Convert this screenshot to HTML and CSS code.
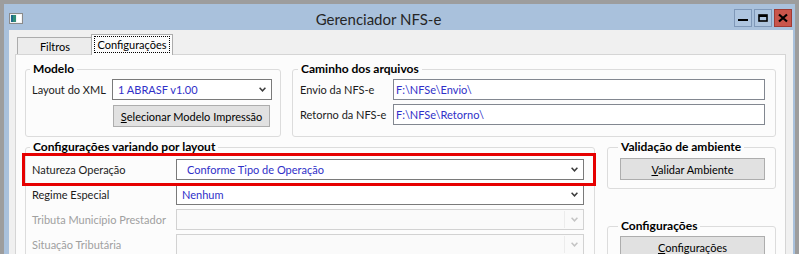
FILE: index.html
```html
<!DOCTYPE html>
<html lang="pt-BR">
<head>
    <meta charset="UTF-8">
    <meta name="viewport" content="width=device-width, initial-scale=1.0">
    <title>Gerenciador NFS-e</title>
    <link rel="stylesheet" href="styles.css">
</head>
<body>
    <div class="window">
        <div class="titlebar">
            <svg class="app-icon" width="14" height="11" viewBox="0 0 14 11">
                <rect x="0.5" y="0.5" width="13" height="10" fill="#f4f4f4" stroke="#8a8a8a"/>
                <rect x="2" y="2" width="5" height="7" fill="#2f8d78"/>
                <rect x="2" y="2" width="2" height="7" fill="#1f6a8a"/>
                <rect x="8" y="2" width="4" height="7" fill="#ffffff"/>
            </svg>
            <div class="title">Gerenciador NFS-e</div>
            <div class="win-buttons">
                <span class="wbtn">
                    <svg width="10" height="10" viewBox="0 0 10 10"><rect x="0" y="6" width="10" height="2" fill="#000"/></svg>
                </span>
                <span class="wbtn">
                    <svg width="10" height="10" viewBox="0 0 10 10"><rect x="1" y="2" width="8" height="6" fill="none" stroke="#000" stroke-width="1.6"/><rect x="1" y="2" width="8" height="2" fill="#000"/></svg>
                </span>
                <span class="wbtn close">
                    <svg width="10" height="10" viewBox="0 0 10 10"><path d="M1 1.5 L9 8.5 M9 1.5 L1 8.5" stroke="#000" stroke-width="2.2"/></svg>
                </span>
            </div>
        </div>

        <div class="client">
            <div class="tabs">
                <div class="tab">Filtros</div>
                <div class="tab active"><span class="focus">Configurações</span></div>
            </div>

            <div class="page">
                <div class="row">
                    <fieldset class="group modelo">
                        <legend>Modelo</legend>
                        <div class="form-grid">
                            <span class="lbl">Layout do XML</span>
                            <div class="combo">
                                <span class="value">1 ABRASF v1.00</span>
                                <svg class="arrow" width="7" height="5" viewBox="0 0 7 5"><polyline points="0.6,0.8 3.5,3.8 6.4,0.8" fill="none" stroke="#3c3c3c" stroke-width="1.5"/></svg>
                            </div>
                            <button class="btn btn-modelo"><u>S</u>elecionar Modelo Impressão</button>
                        </div>
                    </fieldset>

                    <fieldset class="group caminho">
                        <legend>Caminho dos arquivos</legend>
                        <div class="form-grid">
                            <span class="lbl">Envio da NFS-e</span>
                            <div class="field">F:\NFSe\Envio\</div>
                            <span class="lbl">Retorno da NFS-e</span>
                            <div class="field">F:\NFSe\Retorno\</div>
                        </div>
                    </fieldset>
                </div>

                <div class="row row-2">
                    <fieldset class="group layout">
                        <legend>Configurações variando por layout</legend>
                        <div class="form-grid">
                            <div class="hl-row">
                                <span class="lbl">Natureza Operação</span>
                                <div class="combo combo-wide">
                                    <span class="value">Conforme Tipo de Operação</span>
                                    <svg class="arrow" width="7" height="5" viewBox="0 0 7 5"><polyline points="0.6,0.8 3.5,3.8 6.4,0.8" fill="none" stroke="#3c3c3c" stroke-width="1.5"/></svg>
                                </div>
                                <div class="highlight"></div>
                            </div>
                            <span class="lbl">Regime Especial</span>
                            <div class="combo">
                                <span class="value">Nenhum</span>
                                <svg class="arrow" width="7" height="5" viewBox="0 0 7 5"><polyline points="0.6,0.8 3.5,3.8 6.4,0.8" fill="none" stroke="#3c3c3c" stroke-width="1.5"/></svg>
                            </div>
                            <span class="lbl disabled">Tributa Município Prestador</span>
                            <div class="combo combo-off">
                                <span class="value"></span>
                                <span class="sep"></span>
                                <svg class="arrow" width="7" height="5" viewBox="0 0 7 5"><polyline points="0.6,0.8 3.5,3.8 6.4,0.8" fill="none" stroke="#c4c4c4" stroke-width="1.5"/></svg>
                            </div>
                            <span class="lbl disabled">Situação Tributária</span>
                            <div class="combo combo-off">
                                <span class="value"></span>
                                <span class="sep"></span>
                                <svg class="arrow" width="7" height="5" viewBox="0 0 7 5"><polyline points="0.6,0.8 3.5,3.8 6.4,0.8" fill="none" stroke="#c4c4c4" stroke-width="1.5"/></svg>
                            </div>
                        </div>
                    </fieldset>

                    <div class="side">
                        <fieldset class="group validacao">
                            <legend>Validação de ambiente</legend>
                            <button class="btn"><u>V</u>alidar Ambiente</button>
                        </fieldset>
                        <fieldset class="group config">
                            <legend>Configurações</legend>
                            <button class="btn"><u>C</u>onfigurações</button>
                        </fieldset>
                    </div>
                </div>
            </div>
        </div>
    </div>
</body>
</html>
```

FILE: styles.css
```css
body {
    margin: 0;
    height: 254px;
    overflow: hidden;
    background-color: #9d9d9d;
    font-family: Lato, "Liberation Sans", sans-serif;
    font-size: 11px;
    color: #1b1b1b;
}
.window {
    margin: 4px 0 0 4px;
    width: 791px;
    height: 250px;
    box-sizing: border-box;
    padding: 0 2px 0 5px;
    background-color: #a9c1dc;
    display: flex;
    flex-direction: column;
}

/* barra de titulo */
.titlebar {
    height: 26px;
    flex-shrink: 0;
    display: flex;
    align-items: flex-start;
}
.app-icon {
    margin-top: 9px;
}
.title {
    flex: 1;
    text-align: center;
    font-size: 15px;
    line-height: 26px;
    padding-top: 2px;
    color: #262626;
}
.win-buttons {
    display: flex;
    gap: 2px;
    margin: 5px 1px 0 0;
}
.wbtn {
    width: 18px;
    height: 18px;
    box-sizing: border-box;
    border: 1px solid #7f98b8;
    background-color: #aec5df;
    display: flex;
    align-items: center;
    justify-content: center;
}
.wbtn.close {
    background-color: #c9554b;
    border-color: #a03a33;
}

/* area cliente */
.client {
    flex: 1;
    min-height: 0;
    background-color: #f0f0f0;
    padding: 4px 7px 0 6px;
    display: flex;
    flex-direction: column;
}
.tabs {
    height: 20px;
    flex-shrink: 0;
    display: flex;
    align-items: flex-end;
    padding-left: 2px;
}
.tab {
    width: 76px;
    height: 17px;
    box-sizing: border-box;
    border: 1px solid #acacac;
    border-bottom: none;
    background-color: #ececec;
    text-align: center;
    line-height: 17px;
    color: #000;
}
.tab.active {
    width: 82px;
    height: 21px;
    margin: 0 0 -1px -2px;
    background-color: #fcfcfc;
    position: relative;
    z-index: 1;
    line-height: 19px;
}
.focus {
    outline: 1px dotted #000;
    outline-offset: 1px;
    padding: 0 1px;
}
.page {
    flex: 1;
    background-color: #fcfcfc;
    border: 1px solid #d5d5d5;
    border-bottom: none;
    padding: 7px 9px 0;
}
.row {
    display: flex;
    gap: 11px;
}
.row-2 {
    gap: 12px;
    margin-top: 3px;
}

/* grupos */
.group {
    margin: 0;
    min-width: 0;
    border: 1px solid #dcdcdc;
    border-radius: 3px;
    padding: 3px 10px 9px 6px;
}
.group legend {
    font-weight: bold;
    font-size: 12px;
    line-height: 14px;
    padding: 0 3px;
    margin-left: -2px;
    color: #000;
}
.modelo {
    width: 256px;
    box-sizing: border-box;
    padding-right: 8px;
}
.caminho {
    flex: 1;
    padding-left: 7px;
}
.layout {
    width: 570px;
    box-sizing: border-box;
    padding-top: 5px;
}
.side {
    width: 169px;
    display: flex;
    flex-direction: column;
    gap: 30px;
}
.validacao {
    padding: 4px 10px 8px 12px;
}
.config {
    padding: 3px 10px 8px 12px;
}

.form-grid {
    display: grid;
    grid-template-columns: 80px 1fr;
    row-gap: 5px;
    align-items: center;
}
.caminho .form-grid {
    grid-template-columns: 93px 1fr;
    row-gap: 4px;
}
.layout .form-grid {
    grid-template-columns: 144px 1fr;
    row-gap: 4px;
}
.hl-row {
    grid-column: 1 / -1;
    display: grid;
    grid-template-columns: 144px 1fr;
    align-items: center;
    position: relative;
}
.highlight {
    position: absolute;
    top: -6px;
    bottom: -6px;
    left: -10px;
    right: -12px;
    border: 3px solid #e60000;
}
.lbl {
    color: #1b1b1b;
    white-space: nowrap;
}
.lbl.disabled {
    color: #a0a0a0;
}

/* controles */
.combo {
    height: 21px;
    box-sizing: border-box;
    border: 1px solid #7a7a7a;
    background-color: #fff;
    display: flex;
    align-items: center;
    padding: 0 5px 0 5px;
    color: #3030c8;
}
.combo-wide {
    padding-left: 10px;
}
.combo .value {
    flex: 1;
}
.combo-off {
    border-color: #d2d2d2;
    background-color: #fafafa;
}
.sep {
    width: 1px;
    height: 17px;
    background-color: #ececec;
    margin-right: 6px;
}
.field {
    height: 21px;
    box-sizing: border-box;
    border: 1px solid #828790;
    background-color: #fff;
    padding-left: 2px;
    line-height: 19px;
    color: #3030c8;
}
.btn {
    height: 22px;
    width: 100%;
    padding: 0;
    border: 1px solid #adadad;
    background-color: #e1e1e1;
    font: inherit;
    color: #000;
}
.btn-modelo {
    grid-column: 2;
    width: 157px;
    margin-left: 1px;
}
```
